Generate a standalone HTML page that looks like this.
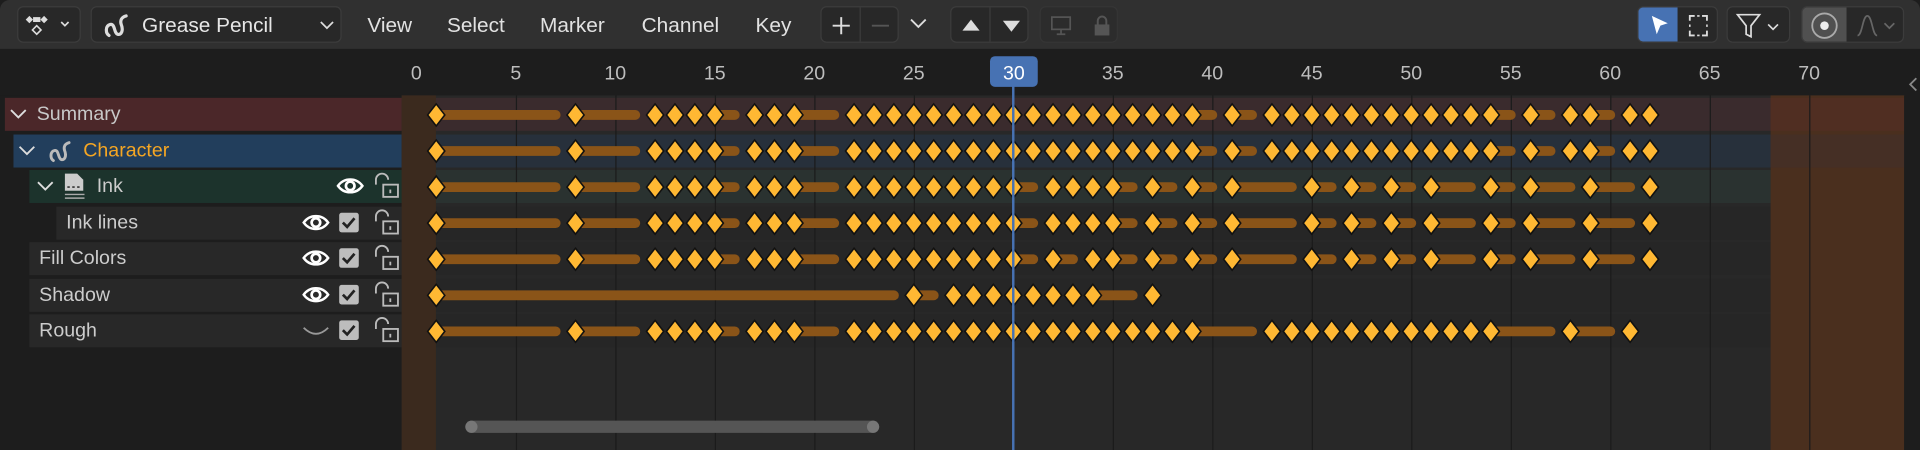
<!DOCTYPE html>
<html><head><meta charset="utf-8"><style>
html,body{margin:0;padding:0;background:#1d1d1d;overflow:hidden;width:1920px;height:450px}
#w{position:absolute;left:0;top:0;width:1568px;height:368px;transform-origin:0 0;transform:scale(1.22449,1.22283);font-family:"Liberation Sans",sans-serif;color:#ddd;background:#1d1d1d}
.a{position:absolute}
.btn{position:absolute;background:#282828;border:1px solid #3c3c3c;border-radius:5px;box-sizing:border-box}
.menu{position:absolute;top:11px;font-size:17px;color:#e2e2e2}
.row{position:absolute;height:27px;font-size:16px;line-height:28px;color:#ddd;box-sizing:border-box}
</style></head><body><div id="w">
<div class="a" style="left:0;top:0;width:1568px;height:40px;background:#303030;border-radius:8px 8px 0 0"></div>
<div class="btn" style="left:14px;top:5px;width:52px;height:30px">
<svg class="a" style="left:4px;top:3px" width="44" height="24" viewBox="0 0 44 24"><path d="M5 4l3 3-3 3-3-3z M17 4l3 3-3 3-3-3z" fill="#ddd"/><rect x="8" y="5" width="6" height="4" fill="#ddd"/><path d="M11 12l3.5 3.5-3.5 3.5-3.5-3.5z" fill="none" stroke="#ddd" stroke-width="1.3"/><path d="M31 9l3 3 3-3" fill="none" stroke="#ddd" stroke-width="1.4"/></svg></div>
<div class="btn" style="left:74px;top:5px;width:205px;height:30px">
<svg class="a" style="left:8px;top:3px" width="26" height="24" viewBox="0 0 26 24"><path d="M6 20c-3-2-3-8 1-9s3 7 6 8 5-3 3-8c-1-3 0-6 4-7" fill="none" stroke="#ddd" stroke-width="2.6" stroke-linecap="round"/></svg>
<div class="a" style="left:41px;top:5px;font-size:17px;color:#e6e6e6">Grease Pencil</div>
<svg class="a" style="left:186px;top:11px" width="12" height="8"><path d="M1 1l5 5 5-5" fill="none" stroke="#ddd" stroke-width="1.4"/></svg></div>
<div class="menu" style="left:300px">View</div><div class="menu" style="left:365px">Select</div><div class="menu" style="left:441px">Marker</div><div class="menu" style="left:524px">Channel</div><div class="menu" style="left:617px">Key</div>
<div class="btn" style="left:670px;top:5px;width:64px;height:30px"><div class="a" style="left:31px;top:0;width:1px;height:28px;background:#3c3c3c"></div>
<svg class="a" style="left:7px;top:6px" width="52" height="18"><path d="M9 2v14M2 9h14" stroke="#ddd" stroke-width="1.6"/><path d="M34 9h14" stroke="#555" stroke-width="1.6"/></svg></div>
<svg class="a" style="left:743px;top:15px" width="14" height="9"><path d="M1 1l6 6 6-6" fill="none" stroke="#ddd" stroke-width="1.5"/></svg>
<div class="btn" style="left:776px;top:5px;width:64px;height:30px"><div class="a" style="left:31px;top:0;width:1px;height:28px;background:#3c3c3c"></div>
<svg class="a" style="left:8px;top:7px" width="50" height="16"><path d="M8 3l7 9H1z" fill="#ddd"/><path d="M34 4h14l-7 9z" fill="#ddd"/></svg></div>
<div class="btn" style="left:849px;top:5px;width:64px;height:30px;background:#2c2c2c;border-color:#353535">
<svg class="a" style="left:8px;top:6px" width="50" height="18"><rect x="1" y="2" width="15" height="10" fill="none" stroke="#555" stroke-width="1.4"/><path d="M5 16h7M8.5 12v4" stroke="#555" stroke-width="1.4"/><rect x="36" y="8" width="12" height="9" fill="#555"/><path d="M38.5 8V5a3.5 3.5 0 017 0v3" fill="none" stroke="#555" stroke-width="1.6"/></svg></div>
<div class="btn" style="left:1337px;top:5px;width:66px;height:30px;overflow:hidden"><div class="a" style="left:0;top:0;width:32px;height:28px;background:#4772b3"></div>
<svg class="a" style="left:8px;top:5px" width="56" height="20"><path d="M3 2l13 6-6 2-3 7z" fill="#fff"/><path d="M34 6V2h4M44 2h4v4M48 14v4h-4M38 18h-4v-4" fill="none" stroke="#ddd" stroke-width="1.5"/><path d="M40 2h2M34 9v2M48 9v2M40 18h2" stroke="#ddd" stroke-width="1.3"/></svg></div>
<div class="btn" style="left:1410px;top:5px;width:52px;height:30px">
<svg class="a" style="left:6px;top:4px" width="42" height="22"><path d="M2 2h18l-7 9v9l-4-2v-7z" fill="none" stroke="#ddd" stroke-width="1.4"/><path d="M27 10l4 4 4-4" fill="none" stroke="#ddd" stroke-width="1.4"/></svg></div>
<div class="btn" style="left:1471px;top:5px;width:84px;height:30px;overflow:hidden"><div class="a" style="left:0;top:0;width:36px;height:28px;background:#505050"></div>
<svg class="a" style="left:5px;top:3px" width="76" height="24"><circle cx="13" cy="12" r="10" fill="none" stroke="#aaa" stroke-width="1.5"/><circle cx="13" cy="12" r="3.5" fill="#eee"/><path d="M40 20c4 0 4-16 8-16s4 16 8 16" fill="none" stroke="#666" stroke-width="1.4"/><path d="M62 10l4 4 4-4" fill="none" stroke="#666" stroke-width="1.4"/></svg></div>
<div class="a" style="left:5px;top:44px;width:322px;height:30px;background:#1b1b1b;border:1px solid #2e2e2e;border-radius:5px;box-sizing:border-box;overflow:hidden">
<div class="a" style="left:281px;top:0;width:41px;height:30px;background:#545454"></div>
<svg class="a" style="left:6px;top:4px" width="24" height="22"><circle cx="14" cy="9" r="6" fill="none" stroke="#ddd" stroke-width="1.5"/><path d="M10 13l-7 7" stroke="#ddd" stroke-width="1.5"/></svg>
<div class="a" style="left:40px;top:5px;font-size:16px;color:#6c6c6c">Search</div>
<svg class="a" style="left:287px;top:7px" width="30" height="16"><path d="M3 8h24M8 3L3 8l5 5M22 3l5 5-5 5" fill="none" stroke="#ddd" stroke-width="1.5"/></svg></div>
<div class="row" style="left:4px;top:80px;width:324px;background:#4b2729"><svg class="a" style="left:4px;top:9px" width="14" height="9"><path d="M1 1l6 6 6-6" fill="none" stroke="#ddd" stroke-width="1.5"/></svg><span class="a" style="left:26px;color:#c8c8c8">Summary</span></div>
<div class="row" style="left:11px;top:110px;width:317px;background:#223e5c"><svg class="a" style="left:4px;top:9px" width="14" height="9"><path d="M1 1l6 6 6-6" fill="none" stroke="#ddd" stroke-width="1.5"/></svg><svg class="a" style="left:27px;top:3px" width="24" height="22" viewBox="0 0 26 24"><path d="M6 20c-3-2-3-8 1-9s3 7 6 8 5-3 3-8c-1-3 0-6 4-7" fill="none" stroke="#bbb" stroke-width="2.6" stroke-linecap="round"/></svg><span class="a" style="left:57px;color:#f5a623">Character</span></div>
<div class="row" style="left:24px;top:139px;width:304px;background:#1c332c"><svg class="a" style="left:6px;top:9px" width="14" height="9"><path d="M1 1l6 6 6-6" fill="none" stroke="#ddd" stroke-width="1.5"/></svg><svg class="a" style="left:27px;top:2px" width="22" height="24"><path d="M2 1h10l5 5v9H2z" fill="#ccc"/><path d="M4 12h2M8 12h2M12 12h2" stroke="#333" stroke-width="1.3"/><path d="M2 18h16M2 21h16" stroke="#aaa" stroke-width="1.2"/></svg><span class="a" style="left:55px;color:#ccc">Ink</span></div>
<div class="row" style="left:46px;top:169px;width:282px;background:#282828"><span class="a" style="left:8px;color:#ccc">Ink lines</span></div>
<div class="row" style="left:24px;top:198px;width:304px;background:#282828"><span class="a" style="left:8px;color:#ccc">Fill Colors</span></div>
<div class="row" style="left:24px;top:228px;width:304px;background:#282828"><span class="a" style="left:8px;color:#ccc">Shadow</span></div>
<div class="row" style="left:24px;top:257px;width:304px;background:#282828"><span class="a" style="left:8px;color:#ccc">Rough</span></div>
<svg class="a" style="left:240px;top:139px" width="90" height="150" id="icons"></svg>
<svg class="a" style="left:0;top:40px" width="1568" height="328" id="tl"></svg>
</div>
<script>
var NS="http://www.w3.org/2000/svg";
function el(p,t,a){var e=document.createElementNS(NS,t);for(var k in a)e.setAttribute(k,a[k]);p.appendChild(e);return e;}
var ic=document.getElementById('icons');
function eye(x,y){el(ic,'path',{d:'M'+(x-10)+' '+y+'c5-7 15-7 20 0c-5 7-15 7-20 0z',fill:'none',stroke:'#fff','stroke-width':2});el(ic,'circle',{cx:x,cy:y,r:3.5,fill:'none',stroke:'#fff','stroke-width':2.2});}
function chk(x,y){el(ic,'rect',{x:x-8,y:y-8,width:16,height:16,rx:2,fill:'#bdbdbd'});el(ic,'path',{d:'M'+(x-5)+' '+y+'l3.5 3.5 6-7',fill:'none',stroke:'#222','stroke-width':2.2});}
function lock(x,y){el(ic,'path',{d:'M'+(x-7)+' '+(y-1)+'v-4a5 5 0 0110 0',fill:'none',stroke:'#bbb','stroke-width':1.5});el(ic,'rect',{x:x-1,y:y-1,width:12,height:10,fill:'none',stroke:'#bbb','stroke-width':1.5});el(ic,'rect',{x:x+4,y:y+3,width:1.5,height:3,fill:'#bbb'});}
var ys=[13,43,72,102,131];
eye(46,ys[0]);lock(74,ys[0]);
for(var i=1;i<5;i++){ if(i<4)eye(18,ys[i]); else el(ic,'path',{d:'M8 '+(ys[i]-2)+'q10 10 20 0',fill:'none',stroke:'#999','stroke-width':1.5}); chk(45,ys[i]); lock(74,ys[i]);}
var s=document.getElementById('tl');
var fx=function(f){return 340+f*16.25;};
el(s,'rect',{x:0,y:0,width:1568,height:38,fill:'#1d1d1d'});
el(s,'rect',{x:328,y:38,width:1240,height:290,fill:'#282828'});
var rows=[[40,'#3a2b2d'],[70,'#27303b'],[99,'#2a3230'],[129,'#262626'],[158,'#262626'],[188,'#262626'],[217,'#262626']];
rows.forEach(function(r){el(s,'rect',{x:328,y:r[0],width:1230,height:27,fill:r[1]});});
el(s,'rect',{x:328,y:38,width:28,height:290,fill:'#3b2a1e'});
el(s,'rect',{x:1446,y:38,width:110,height:290,fill:'#4a2f1e'});
el(s,'rect',{x:1446,y:40,width:110,height:27,fill:'#502e22'});
el(s,'rect',{x:1446,y:70,width:110,height:27,fill:'#452f25'});
for(var f=5;f<=75;f+=5){el(s,'rect',{x:fx(f),y:38,width:1,height:290,fill:'#1b1b1b'});}
for(var f=0;f<=70;f+=5){if(f==30)continue;var t=el(s,'text',{x:fx(f),y:25,fill:'#bdbdbd','font-size':16,'text-anchor':'middle','font-family':'Liberation Sans, sans-serif'});t.textContent=f;}
el(s,'rect',{x:1555,y:38,width:13,height:290,fill:'#1d1d1d'});
function R(a,b){var r=[];for(var i=a;i<=b;i++)r.push(i);return r;}
var base=[1,8].concat(R(12,15),R(17,19),R(22,29));
var sum=base.concat(R(30,39),[41],R(43,54),[56,58,59,61,62]);
var ink=base.concat([30,32,33,34,35,37,39,41,45,47,49,51,54,56,59,62]);
var fill=base.concat([30,32,34,35,37,39,41,45,47,49,51,54,56,59,62]);
var sh=[1,25].concat(R(27,34),[37]);
var rough=base.concat(R(30,39),R(43,54),[58,61]);
var K=[sum,sum,ink,ink,fill,sh,rough];
K.forEach(function(k,i){var y=40+i*29.5+14;
 for(var j=0;j<k.length-1;j++){if(k[j+1]-k[j]>1){var x1=fx(k[j]),x2=fx(k[j+1]-0.75);el(s,'rect',{x:x1,y:y-4,width:x2-x1,height:8,rx:4,fill:'#8a5418'});}}
 k.forEach(function(f){var x=fx(f);el(s,'path',{d:'M'+x+' '+(y-9)+'L'+(x+7)+' '+y+'L'+x+' '+(y+9)+'L'+(x-7)+' '+y+'z',fill:'#ffb833',stroke:'#111','stroke-width':1.3});});
});
var cx=fx(30);
el(s,'rect',{x:cx-1,y:30,width:2,height:298,fill:'#4772b3'});
el(s,'rect',{x:cx-19,y:6,width:39,height:25,rx:4,fill:'#4772b3'});
var t=el(s,'text',{x:cx+0.5,y:25,fill:'#fff','font-size':16,'text-anchor':'middle','font-family':'Liberation Sans, sans-serif'});t.textContent='30';
el(s,'rect',{x:380,y:304,width:338,height:10,rx:5,fill:'#555'});
el(s,'circle',{cx:385,cy:309,r:5,fill:'#777'});el(s,'circle',{cx:713,cy:309,r:5,fill:'#777'});
el(s,'path',{d:'M1565 24l-5 5 5 5',fill:'none',stroke:'#888','stroke-width':1.5});
</script>
</body></html>
